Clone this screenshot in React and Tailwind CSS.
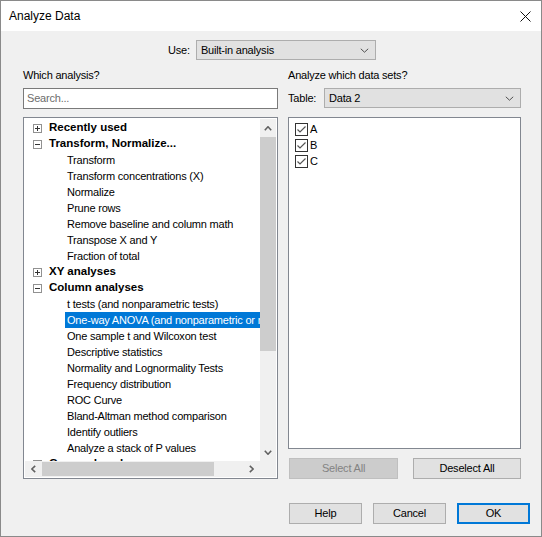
import React from "react";

const Chevron = ({ dir = "down", color = "#606060", w = 8, h = 5, sw = 1.5 }) => {
  let pts;
  if (dir === "down") pts = `0.8,0.8 ${w / 2},${h - 0.8} ${w - 0.8},0.8`;
  if (dir === "up") pts = `0.8,${h - 0.8} ${w / 2},0.8 ${w - 0.8},${h - 0.8}`;
  if (dir === "left") pts = `${w - 0.8},0.8 0.8,${h / 2} ${w - 0.8},${h - 0.8}`;
  if (dir === "right") pts = `0.8,0.8 ${w - 0.8},${h / 2} 0.8,${h - 0.8}`;
  return (
    <svg width={w} height={h} viewBox={`0 0 ${w} ${h}`} className="block">
      <polyline points={pts} fill="none" stroke={color} strokeWidth={sw} />
    </svg>
  );
};

const ExpandBox = ({ open }) => (
  <svg width="9" height="9" viewBox="0 0 9 9" className="block shrink-0">
    <rect x="0.5" y="0.5" width="8" height="8" fill="#fff" stroke="#919191" />
    <line x1="2" y1="4.5" x2="7" y2="4.5" stroke="#333" />
    {!open && <line x1="4.5" y1="2" x2="4.5" y2="7" stroke="#333" />}
  </svg>
);

const CheckBox = () => (
  <svg width="13" height="13" viewBox="0 0 13 13" className="block shrink-0">
    <rect x="0.5" y="0.5" width="12" height="12" fill="#fff" stroke="#333" />
    <polyline points="2.5,6.5 5,9 10.5,3.5" fill="none" stroke="#555" strokeWidth="1.2" />
  </svg>
);

const Select = ({ value, className }) => (
  <div
    className={`h-[20px] bg-[#e1e1e1] border border-[#adadad] flex items-center justify-between pl-[4px] pr-[6px] ${className}`}
  >
    <span>{value}</span>
    <Chevron dir="down" w={9} h={5} sw={1} color="#505050" />
  </div>
);

const Button = ({ children, className = "", disabled, primary }) => (
  <div
    className={`flex items-center justify-center ${
      disabled
        ? "bg-[#cccccc] border border-[#bfbfbf] text-[#838383]"
        : primary
        ? "bg-[#e1e1e1] border-2 border-[#0078d7]"
        : "bg-[#e1e1e1] border border-[#adadad]"
    } ${className}`}
  >
    {children}
  </div>
);

const rows = [
  { t: "Recently used", head: true, open: false },
  { t: "Transform, Normalize...", head: true, open: true },
  { t: "Transform" },
  { t: "Transform concentrations (X)" },
  { t: "Normalize" },
  { t: "Prune rows" },
  { t: "Remove baseline and column math" },
  { t: "Transpose X and Y" },
  { t: "Fraction of total" },
  { t: "XY analyses", head: true, open: false },
  { t: "Column analyses", head: true, open: true },
  { t: "t tests (and nonparametric tests)" },
  { t: "One-way ANOVA (and nonparametric or mixed)", sel: true },
  { t: "One sample t and Wilcoxon test" },
  { t: "Descriptive statistics" },
  { t: "Normality and Lognormality Tests" },
  { t: "Frequency distribution" },
  { t: "ROC Curve" },
  { t: "Bland-Altman method comparison" },
  { t: "Identify outliers" },
  { t: "Analyze a stack of P values" },
  { t: "Grouped analyses", head: true, open: true },
];

export default function App() {
  return (
    <div className="w-[542px] h-[537px] border border-[#8a8a8a] bg-[#f0f0f0] flex flex-col font-['Liberation_Sans',Arial,sans-serif] text-[11px] tracking-[-0.2px] text-black overflow-hidden">
      {/* Title bar */}
      <div className="h-[30px] shrink-0 bg-white flex items-center justify-between pl-[8px] pr-[10px]">
        <span className="text-[12px] tracking-normal">Analyze Data</span>
        <svg width="11" height="11" viewBox="0 0 11 11" className="block">
          <line x1="0.5" y1="0.5" x2="10.5" y2="10.5" stroke="#111" strokeWidth="1" />
          <line x1="10.5" y1="0.5" x2="0.5" y2="10.5" stroke="#111" strokeWidth="1" />
        </svg>
      </div>

      {/* Use row */}
      <div className="mt-[9px] h-[20px] flex items-center justify-center gap-[6px] pl-[22px] pr-[20px]">
        <span>Use:</span>
        <Select value="Built-in analysis" className="w-[180px]" />
      </div>

      {/* Columns */}
      <div className="mt-[7px] flex gap-[10px] pl-[22px] pr-[20px]">
        {/* Left */}
        <div className="w-[255px] flex flex-col">
          <div className="h-[16px] leading-[16px]">Which analysis?</div>
          <div className="mt-[5px] h-[21px] bg-white border border-[#7a7a7a] flex items-center px-[3px] text-[#6d6d6d]">
            Search...
          </div>
          <div className="mt-[8px] h-[362px] bg-white border border-[#828790] p-[1px] flex flex-col">
            <div className="flex h-[342px]">
              <div className="flex-1 min-w-0 overflow-hidden pt-[1px]">
                {rows.map((r, i) =>
                  r.head ? (
                    <div key={i} className="h-[16px] flex items-center pl-[8px] whitespace-nowrap">
                      <ExpandBox open={r.open} />
                      <span className="ml-[7px] font-bold text-[11.5px] tracking-normal">{r.t}</span>
                    </div>
                  ) : (
                    <div key={i} className="h-[16px] flex items-center pl-[40px]">
                      <span
                        className={`flex-1 min-w-0 h-[16px] leading-[16px] px-[2px] whitespace-nowrap overflow-hidden ${
                          r.sel ? "bg-[#0078d7] text-white" : ""
                        }`}
                      >
                        {r.t}
                      </span>
                    </div>
                  )
                )}
              </div>
              {/* vertical scrollbar */}
              <div className="w-[16px] bg-[#f0f0f0] flex flex-col">
                <div className="h-[18px] flex items-center justify-center">
                  <Chevron dir="up" w={8} h={5} sw={1.6} />
                </div>
                <div className="h-[214px] bg-[#cdcdcd]"></div>
                <div className="flex-1"></div>
                <div className="h-[17px] flex items-center justify-center">
                  <Chevron dir="down" w={8} h={5} sw={1.6} />
                </div>
              </div>
            </div>
            {/* horizontal scrollbar */}
            <div className="h-[16px] bg-[#f0f0f0] flex items-center">
              <div className="w-[17px] flex items-center justify-center">
                <Chevron dir="left" w={5} h={8} sw={1.6} />
              </div>
              <div className="w-[172px] h-[14px] bg-[#cdcdcd]"></div>
              <div className="flex-1"></div>
              <div className="w-[17px] flex items-center justify-center">
                <Chevron dir="right" w={5} h={8} sw={1.6} />
              </div>
              <div className="w-[16px]"></div>
            </div>
          </div>
        </div>

        {/* Right */}
        <div className="w-[233px] flex flex-col">
          <div className="h-[16px] leading-[16px]">Analyze which data sets?</div>
          <div className="mt-[5px] h-[20px] flex items-center">
            <span>Table:</span>
            <Select value="Data 2" className="ml-auto w-[197px]" />
          </div>
          <div className="mt-[9px] h-[332px] bg-white border border-[#828790] pl-[6px] pt-[3px]">
            {["A", "B", "C"].map((l) => (
              <div key={l} className="h-[16px] flex items-center">
                <CheckBox />
                <span className="ml-[2px]">{l}</span>
              </div>
            ))}
          </div>
          <div className="mt-[9px] h-[21px] flex justify-between pl-[1px]">
            <Button disabled className="w-[109px]">Select All</Button>
            <Button className="w-[108px]">Deselect All</Button>
          </div>
        </div>
      </div>

      {/* Bottom buttons */}
      <div className="mt-[24px] h-[21px] flex justify-end gap-[11px] pr-[11px]">
        <Button className="w-[73px]">Help</Button>
        <Button className="w-[73px]">Cancel</Button>
        <Button primary className="w-[73px]">OK</Button>
      </div>
    </div>
  );
}
